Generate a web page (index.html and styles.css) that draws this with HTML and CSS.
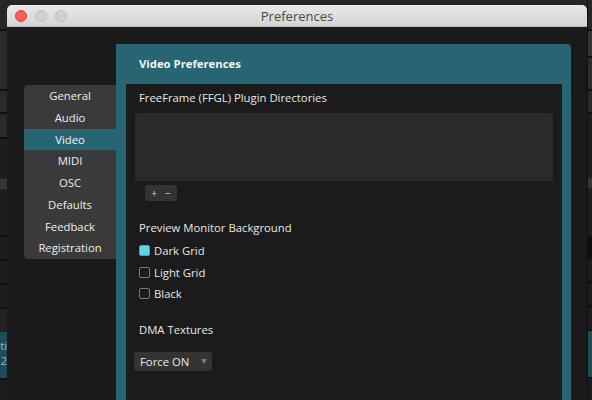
FILE: index.html
```html
<!DOCTYPE html>
<html>
<head>
<meta charset="utf-8">
<link rel="stylesheet" href="styles.css">
</head>
<body>
<div class="desk">
  <div class="strip strip-left">
    <div class="srow s-top"></div>
    <div class="srow s-a"></div>
    <div class="srow s-b"></div>
    <div class="srow s-b2"></div>
    <div class="srow s-c"></div>
    <div class="srow s-band"></div>
    <div class="srow s-d"></div>
    <div class="srow s-e"></div>
    <div class="srow s-e"></div>
    <div class="srow s-e2"></div>
    <div class="srow s-f"></div>
    <div class="srow s-teal"><span>ati</span><span>2</span></div>
    <div class="srow s-rest"></div>
  </div>

  <div class="window">
    <header class="titlebar">
      <div class="lights">
        <span class="light red"></span>
        <span class="light off"></span>
        <span class="light off"></span>
      </div>
      <div class="title">Preferences</div>
      <div></div>
    </header>

    <div class="wbody">
      <nav class="sidebar">
        <div class="nav-item">General</div>
        <div class="nav-item">Audio</div>
        <div class="nav-item active">Video</div>
        <div class="nav-item">MIDI</div>
        <div class="nav-item">OSC</div>
        <div class="nav-item">Defaults</div>
        <div class="nav-item">Feedback</div>
        <div class="nav-item">Registration</div>
      </nav>

      <section class="panel">
        <h1 class="panel-title">Video Preferences</h1>
        <div class="inner">
          <div class="label first">FreeFrame (FFGL) Plugin Directories</div>
          <div class="dirlist"></div>
          <div class="pm"><span>+</span><span>−</span></div>

          <div class="label sec">Preview Monitor Background</div>
          <div class="checks">
            <label class="check"><span class="box checked"></span>Dark Grid</label>
            <label class="check"><span class="box"></span>Light Grid</label>
            <label class="check"><span class="box"></span>Black</label>
          </div>

          <div class="label sec2">DMA Textures</div>
          <div class="select"><span>Force ON</span><span class="arrow"></span></div>
        </div>
      </section>
    </div>
  </div>

  <div class="strip strip-right">
    <div class="srow r-top"></div>
    <div class="srow r-a"></div>
    <div class="srow r-b"></div>
    <div class="srow r-b2"></div>
    <div class="srow r-c"></div>
    <div class="srow s-band"></div>
    <div class="srow r-d"></div>
    <div class="srow r-black"></div>
    <div class="srow r-e"></div>
    <div class="srow r-e"></div>
    <div class="srow r-e2"></div>
    <div class="srow r-f"></div>
    <div class="srow r-teal"></div>
    <div class="srow s-rest"></div>
  </div>
</div>
</body>
</html>
```

FILE: styles.css
```css
* { box-sizing: border-box; margin: 0; padding: 0; }

html, body {
  width: 592px;
  height: 400px;
  overflow: hidden;
  background: #262626;
  font-family: "Open Sans", "DejaVu Sans", sans-serif;
  font-size: 11.3px;
  color: #e6e6e6;
}

.desk {
  display: flex;
  height: 400px;
}

/* background strips (other windows on the desktop) */
.strip {
  display: flex;
  flex-direction: column;
  flex: none;
  overflow: hidden;
}
.strip-left { width: 7px; }
.strip-right { width: 5px; border-left: 1px solid #0e0e0e; }

.srow { flex: none; border-bottom: 2px solid #101010; }
.s-top  { height: 31px; background: #262626; }
.s-a    { height: 60px; background: #2b2b2b; }
.s-b    { height: 23px; background: #2a2a2a; }
.s-b2   { height: 25px; background: #2a2a2a; }
.s-c    { height: 40px; background: #1e1e1e; border-bottom: none; }
.s-band { height: 10px; background: #353535; border-bottom: none; }
.s-d    { height: 48px; background: #1e1e1e; }
.s-e    { height: 24px; background: #1d1d1d; }
.s-e2   { height: 24px; background: #1d1d1d; }
.s-f    { height: 23px; background: #222; border-bottom: none; }
.s-teal {
  height: 48px;
  background: #1c4d59;
  color: #9fb8be;
  font-size: 11px;
  line-height: 15px;
  padding-top: 6px;
  display: flex;
  flex-direction: column;
  align-items: flex-end;
  overflow: hidden;
}
.s-rest { flex: 1; background: #1b1b1b; border-bottom: none; }

.r-top  { height: 31px; background: #262626; }
.r-a    { height: 27px; background: #333; }
.r-b    { height: 33px; background: #2e2e2e; }
.r-b2   { height: 23px; background: #2a2a2a; }
.r-c    { height: 64px; background: #1e1e1e; border-bottom: none; }
.r-d    { height: 48px; background: #1e1e1e; border-bottom: none; }
.r-black{ height: 23px; background: #0f0f0f; }
.r-e    { height: 24px; background: #1d1d1d; }
.r-e2   { height: 24px; background: #1d1d1d; }
.r-f    { height: 0; border-bottom: none; }
.r-teal { height: 48px; background: #1c4d59; }

/* main window */
.window {
  flex: none;
  width: 580px;
  margin-top: 5px;
  display: flex;
  flex-direction: column;
  background: #1a1a1a;
  border-radius: 5px 5px 0 0;
}

.titlebar {
  height: 22px;
  display: grid;
  grid-template-columns: 1fr auto 1fr;
  align-items: center;
  background: linear-gradient(#e9e9e9, #d4d4d4);
  border-bottom: 1px solid #b5b5b5;
  border-radius: 5px 5px 0 0;
}
.lights {
  display: flex;
  gap: 8px;
  padding-left: 8px;
}
.light {
  width: 12px;
  height: 12px;
  border-radius: 50%;
}
.light.red { background: #fd5e57; border: 1px solid #e1463f; }
.light.off { background: #d1d1d1; border: 1px solid #bfbfbf; }
.title {
  font-size: 13px;
  color: #4a4a4a;
  line-height: 22px;
}

.wbody {
  flex: 1;
  display: flex;
  padding: 17px 16px 0 17px;
}

/* sidebar */
.sidebar {
  flex: none;
  width: 92px;
  height: 174px;
  margin-top: 41px;
  background: #3a3a3a;
  border-radius: 4px 0 0 4px;
  display: flex;
  flex-direction: column;
}
.nav-item {
  height: 21.75px;
  line-height: 21.75px;
  text-align: center;
  color: #ededed;
}
.nav-item.active { background: #266571; color: #f4f4f4; }

/* teal panel */
.panel {
  flex: 1;
  display: flex;
  flex-direction: column;
  background: #266571;
  border-radius: 0 4px 0 0;
  padding: 0 9px 0 10px;
}
.panel-title {
  height: 40px;
  line-height: 40px;
  padding-left: 13px;
  font-size: 11.3px;
  font-weight: 700;
  color: #f4f4f4;
}
.inner {
  flex: 1;
  background: #1b1b1b;
  padding: 0 9px 0 9px;
}

.label {
  line-height: 14px;
  padding-left: 4px;
  color: #e8e8e8;
}
.label.first { margin-top: 7px; }
.label.sec { margin-top: 20px; }
.label.sec2 { margin-top: 18px; }

.dirlist {
  height: 68px;
  margin-top: 8px;
  background: #2a2a2a;
  border-radius: 3px;
}

.pm {
  width: 32px;
  height: 16px;
  margin: 4px 0 0 10px;
  background: #333;
  border-radius: 3px;
  display: flex;
  justify-content: center;
  gap: 8px;
  align-items: center;
  font-size: 10px;
  line-height: 16px;
  color: #cfcfcf;
}

.checks {
  margin-top: 5px;
  display: flex;
  flex-direction: column;
}
.check {
  height: 21.5px;
  display: flex;
  align-items: center;
  gap: 4px;
  padding-left: 4px;
  color: #e8e8e8;
}
.box {
  width: 11px;
  height: 11px;
  border: 1px solid #7a7a7a;
  border-radius: 2px;
  background: #1b1b1b;
}
.box.checked {
  background: #5bd6eb;
  border-color: #8a8a8a;
}

.select {
  width: 78px;
  height: 19px;
  margin-top: 15px;
  margin-left: -1px;
  background: #333;
  border-radius: 3px;
  display: flex;
  align-items: center;
  justify-content: space-between;
  padding: 0 5px 0 6px;
  color: #e8e8e8;
}
.arrow {
  width: 0;
  height: 0;
  border-left: 3px solid transparent;
  border-right: 3px solid transparent;
  border-top: 5px solid #7c7c7c;
  margin-top: 1px;
}
```
